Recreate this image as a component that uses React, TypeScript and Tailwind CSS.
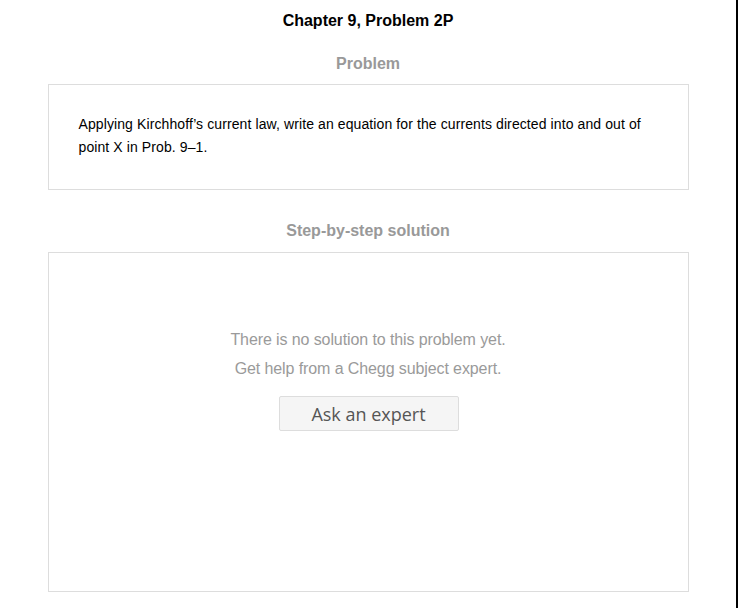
export default function App() {
  return (
    <div className="w-[738px] h-[608px] bg-white overflow-hidden" style={{ fontFamily: '"Liberation Sans", Arial, sans-serif' }}>
      <div className="w-[738px] h-[608px] border-r-2 border-black flex flex-col items-center">
        <h1 className="mt-[11px] text-[16px] leading-[20px] font-bold text-black">Chapter 9, Problem 2P</h1>
        <h2 className="mt-[23px] text-[16px] leading-[20px] font-bold text-[#999999]">Problem</h2>
        <div className="mt-[10px] w-[641px] h-[106px] border border-[#dddddd] pl-[30px] pr-[30px] pt-[28px]">
          <p className="text-[14px] leading-[23px] text-black tracking-[0.1px]">
            Applying Kirchhoff’s current law, write an equation for the currents directed into and out of point X in Prob. 9–1.
          </p>
        </div>
        <h2 className="mt-[31px] text-[16px] leading-[20px] font-bold text-[#999999]">Step-by-step solution</h2>
        <div className="mt-[11px] w-[641px] h-[340px] border border-[#dddddd] flex flex-col items-center pt-[72px]">
          <p className="text-[16px] leading-[29px] text-[#9a9a9a] text-center tracking-[-0.1px]">
            There is no solution to this problem yet.
            <br />
            Get help from a Chegg subject expert.
          </p>
          <button
            className="mt-[13px] ml-[1px] w-[180px] h-[35px] bg-[#f5f5f5] border border-[#dddddd] rounded-[2px] text-[18px] text-[#555555] leading-[35px]"
            style={{ fontFamily: '"Open Sans", "Noto Sans", sans-serif' }}
          >
            Ask an expert
          </button>
        </div>
      </div>
    </div>
  );
}
